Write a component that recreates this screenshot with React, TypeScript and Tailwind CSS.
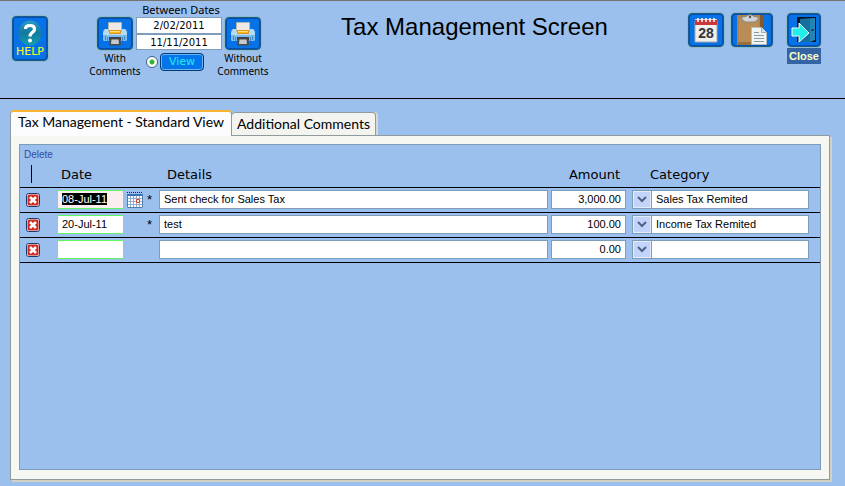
import React from 'react';

type Entry = {
  date: string;
  details: string;
  amount: string;
  category: string;
};

const entries: Entry[] = [
  { date: '08-Jul-11', details: 'Sent check for Sales Tax', amount: '3,000.00', category: 'Sales Tax Remited' },
  { date: '20-Jul-11', details: 'test', amount: '100.00', category: 'Income Tax Remited' },
  { date: '', details: '', amount: '0.00', category: '' },
];

const categories = ['', 'Sales Tax Remited', 'Income Tax Remited'];

const iconButton =
  'flex items-center justify-center rounded-sm border border-[#1c5a8c] bg-[#0672e6] shadow-[inset_0_0_0_1px_#0350b4,0_0_0_1px_#8dbcc8]';

const HelpIcon = () => (
  <svg width="24" height="26" viewBox="0 0 24 26" aria-hidden="true">
    <defs>
      <linearGradient id="help" x1="0" y1="0" x2="0" y2="1">
        <stop offset="0" stopColor="#2b9bc8" />
        <stop offset="0.5" stopColor="#127a9f" />
        <stop offset="1" stopColor="#159fae" />
      </linearGradient>
    </defs>
    <ellipse cx="12" cy="13" rx="11.5" ry="12.5" fill="url(#help)" />
    <path d="M7.500 9C7.500 6.500 9.500 5.500 12 5.500s4.500 1.300 4.500 3.700c0 3.300-4.500 3-4.500 7.300" fill="none" stroke="#fff" strokeWidth="3.200" />
    <circle cx="12" cy="20.500" r="2" fill="#fff" />
  </svg>
);

const PrinterIcon = () => (
  <svg width="26" height="26" viewBox="0 0 26 26" aria-hidden="true">
    <path d="M3 8h20q2 1 2 4v6q0 2-2 2H3q-2 0-2-2v-6q0-3 2-4z" fill="#b4dcf8" />
    <path d="M1 14h24v4q0 2-2 2H3q-2 0-2-2z" fill="#7bbcec" />
    <path d="M3.500 15v4M5.500 16v4M20.500 16v4M22.500 15v4" stroke="#4188c4" />
    <path d="M6.500 1.500h13v9h-13z" fill="#eceae6" stroke="#b5b3ae" />
    <path d="M7.500 9.500h11v3h-11z" fill="#fbb91d" stroke="#e39512" />
    <path d="M8 10.500h10" stroke="#ffe17a" />
    <path d="M7 16h12v3l-1 2H8l-1-2z" fill="#3d3f45" />
    <path d="M8 17.500h10l1 7H7z" fill="#4a4a4e" />
    <path d="M9.500 18.500h7l.5 4.500h-8z" fill="#c9cacb" />
  </svg>
);

const CalendarIcon = () => (
  <svg width="26" height="28" viewBox="0 0 26 28" aria-hidden="true">
    <path d="M2 5h22v21H2z" fill="#efefed" stroke="#aaa9a8" />
    <path d="M2 4h22v5H2z" fill="#c93538" />
    <path d="M2 3.500h22" stroke="#e8c6c6" />
    <path d="M5 2v4M9 2v4M13 2v4M17 2v4M21 2v4" stroke="#fff" strokeWidth="1.500" />
    <text x="13" y="22" textAnchor="middle" fontFamily="Liberation Sans, sans-serif" fontWeight="700" fontSize="14" fill="#333">
      28
    </text>
  </svg>
);

const ClipboardIcon = () => (
  <svg width="32" height="32" viewBox="0 0 32 32" aria-hidden="true">
    <path d="M1 1h26v30H1z" fill="#b0834a" />
    <path d="M24 1h3v30h-3z" fill="#80592e" />
    <path d="M3 4h20v24H3z" fill="#b98d55" />
    <path d="M2 28h14v3H2z" fill="#98713e" />
    <path d="M6 3q5 0 6-2h4q1 2 6 2v3q-2 0-3 2H9Q8 6 6 6z" fill="#d2d3d4" stroke="#8a8a8a" />
    <circle cx="14" cy="3" r="1.200" fill="#555" />
    <path d="M15.500 13.500h10l5 5v12h-15z" fill="#f1f4f4" stroke="#b5bdc0" />
    <path d="M25.500 13.500v5h5" fill="#dce1e2" stroke="#a5acaf" />
    <path d="M18 18.500h5M18 21.500h10M18 24.500h10M18 27.500h10" stroke="#8c999c" />
  </svg>
);

const DoorIcon = () => (
  <svg width="28" height="28" viewBox="0 0 28 28" aria-hidden="true">
    <path d="M7 1h19v25H7z" fill="#061629" />
    <path d="M10 3l15-1v22l-5 2H10z" fill="#2385b4" />
    <path d="M10 3h10v23H10z" fill="#176fa1" />
    <circle cx="22.500" cy="14" r="1" fill="#0a2540" />
    <path d="M2 12h7V7l10 10L9 26v-6H2z" fill="#22efea" stroke="#efffff" />
  </svg>
);

const DatePickerIcon = () => (
  <svg width="16" height="16" viewBox="0 0 16 16" aria-hidden="true">
    <path d="M0 2h16v14H0z" fill="#fff" />
    <path d="M0 2h16v2H0z" fill="#3c70b7" />
    <path d="M0 .5h16" stroke="#222" strokeDasharray="1 1" />
    <path d="M3.500 4v11M6.500 4v11M9.500 4v11M12.500 4v11M0 6.500h15M0 9.500h15M0 12.500h15" stroke="#91add1" />
    <path d="M.5 4v11.500h15V3" fill="none" stroke="#547dac" />
    <path d="M9.500 7.500h3v3h-3z" fill="#fff" stroke="#e04428" />
  </svg>
);

const DeleteIcon = () => (
  <svg width="14" height="14" viewBox="0 0 14 14" aria-hidden="true">
    <rect x="0.500" y="0.500" width="13" height="13" rx="2" fill="#fff" stroke="#173a72" />
    <rect x="1.500" y="1.500" width="11" height="11" rx="1.500" fill="#cf2b22" />
    <path d="M4 4l6 6M10 4l-6 6" stroke="#fff" strokeWidth="2.600" />
  </svg>
);

const PrintColumn: React.FC<{ label: string }> = ({ label }) => (
  <div className="mt-4 flex flex-col items-center gap-0.5 text-center font-['Noto_Sans',sans-serif] text-[10px] leading-[13px]">
    <button type="button" aria-label={`Print ${label} Comments`} className={`${iconButton} h-[33px] w-9`}>
      <PrinterIcon />
    </button>
    <span>
      {label}
      <br />
      Comments
    </span>
  </div>
);

const Header = () => (
  <header className="flex h-[99px] items-start border-t border-b border-t-[#77726c] border-b-black px-3">
    <button type="button" className={`${iconButton} mt-[15px] h-[45px] w-9 flex-col text-[11px] leading-3 text-[#ffff1f]`}>
      <HelpIcon />
      HELP
    </button>

    <section className="ml-[49px] grid grid-cols-[36px_86px_36px] gap-x-[3px]">
      <PrintColumn label="With" />
      <div role="group" aria-label="Report period" className="flex flex-col items-center pt-0.5">
        <span className="pl-1 font-['Noto_Sans',sans-serif] text-[11px] leading-[13px]">Between Dates</span>
        <input aria-label="From date" defaultValue="2/02/2011" className="mt-px h-[17px] w-full border border-[#7f9db9] bg-white text-center text-[10px] outline-none" />
        <input aria-label="To date" defaultValue="11/11/2011" className="h-4 w-full border border-[#7f9db9] bg-white text-center text-[10px] outline-none" />
        <div className="mt-[3px] flex items-center gap-0.5 pr-2">
          <input
            type="radio"
            defaultChecked
            aria-label="Date range"
            className="size-3 appearance-none rounded-full border border-[#38617c] bg-white bg-[radial-gradient(circle,#35b02c_2px,transparent_3px)]"
          />
          <button type="button" className="h-[18px] w-11 rounded-sm border border-[#003c74] bg-[#0474ea] text-[11px] leading-4 text-[#22eeee] shadow-[inset_0_0_0_1px_#6eb3f2]">
            View
          </button>
        </div>
      </div>
      <PrintColumn label="Without" />
    </section>

    <h1 className="mt-2.5 flex-1 text-center font-['Liberation_Sans',sans-serif] text-[24px] leading-8">Tax Management Screen</h1>

    <nav className="mt-3 mr-3 flex items-start">
      <button type="button" aria-label="Calendar" className={`${iconButton} h-[34px] w-9`}>
        <CalendarIcon />
      </button>
      <button type="button" aria-label="Notes" className={`${iconButton} ml-[7px] h-[34px] w-[42px]`}>
        <ClipboardIcon />
      </button>
      <button type="button" className="ml-3.5 flex flex-col font-['Liberation_Sans',sans-serif] text-[11px] leading-4 font-bold text-[#ffffc8]">
        <span className={`${iconButton} h-[34px] w-[34px]`}>
          <DoorIcon />
        </span>
        <span className="mt-px w-full bg-[#3564a4] text-center">Close</span>
      </button>
    </nav>
  </header>
);

const Row: React.FC<{ entry: Entry; active: boolean }> = ({ entry, active }) => {
  const field = 'block h-[19px] w-full border border-[#7f9db9] bg-white px-1 pb-0.5 text-[11px] outline-none';
  return (
    <tr className="h-[25px] [&>td]:border-b [&>td]:border-black [&>td]:pb-px">
      <td className="pl-1.5">
        <button type="button" aria-label="Delete row" className="block">
          <DeleteIcon />
        </button>
      </td>
      <td>
        <input
          aria-label="Date"
          defaultValue={entry.date}
          autoFocus={active}
          onFocus={(e) => active && e.target.select()}
          className={`block h-[19px] w-full border border-[#62f562] px-1 pb-0.5 text-[11px] outline-none selection:bg-black selection:text-white ${active ? 'bg-[#fbeeee]' : 'bg-white'}`}
        />
      </td>
      <td className="pl-[3px]">
        {active && (
          <button type="button" aria-label="Pick date" className="block">
            <DatePickerIcon />
          </button>
        )}
      </td>
      <td className="pl-0.5 text-[13px] leading-4">{entry.date && '*'}</td>
      <td className="pr-[3px]">
        <input aria-label="Details" defaultValue={entry.details} className={field} />
      </td>
      <td className="pr-1.5">
        <input aria-label="Amount" defaultValue={entry.amount} className={`${field} text-right`} />
      </td>
      <td className="pr-[11px]">
        <div className="relative">
          <select aria-label="Category" defaultValue={entry.category} className="block h-[19px] w-full appearance-none border border-[#7f9db9] bg-white pb-0.5 pl-[23px] text-[11px] outline-none">
            {categories.map((category) => (
              <option key={category} value={category}>
                {category}
              </option>
            ))}
          </select>
          <span className="pointer-events-none absolute inset-y-0 left-0 flex w-5 items-center justify-center border border-[#7f9db9] bg-[#c3d4fb] shadow-[inset_0_0_0_1px_#e2ecff]">
            <svg width="10" height="7" viewBox="0 0 10 7" aria-hidden="true">
              <path d="M1 1l4 4 4-4" fill="none" stroke="#4d6185" strokeWidth="2" />
            </svg>
          </span>
        </div>
      </td>
    </tr>
  );
};

export default function App() {
  return (
    <div className="flex min-h-screen flex-col bg-[#9bc0ee] font-['DejaVu_Sans',sans-serif] text-black">
      <Header />
      <main className="flex flex-1 flex-col pt-[11px] pr-[15px] pb-1.5 pl-2.5">
        <div role="tablist" className="flex items-end font-['Lato',sans-serif] text-[14px] leading-5">
          <button type="button" role="tab" aria-selected="true" className="relative z-10 -mb-px h-[26px] rounded-t-sm border border-t-2 border-b-0 border-[#919b9c] border-t-[#f9b52d] bg-[#fcfcfe] px-[7px] pb-1">
            Tax Management - Standard View
          </button>
          <button type="button" role="tab" aria-selected="false" className="h-[23px] rounded-t-sm border border-b-0 border-l-0 border-[#919b9c] bg-[#f3f3ef] px-[5px] shadow-[2px_0_0_#d8d9ce]">
            Additional Comments
          </button>
        </div>
        <section className="flex flex-1 flex-col border border-[#919b9c] bg-[#f6f6f2] p-2 pb-[9px] shadow-[2px_2px_0_#d3d2c2]">
          <div className="flex-1 border border-[#7f9db9] bg-[#9bc0ee]">
            <table className="w-full table-fixed border-separate border-spacing-0 font-['Liberation_Sans',sans-serif]">
              <colgroup>
                <col className="w-[37px]" />
                <col className="w-[67px]" />
                <col className="w-[21px]" />
                <col className="w-[14px]" />
                <col />
                <col className="w-[81px]" />
                <col className="w-[188px]" />
              </colgroup>
              <thead>
                <tr className="h-[43px] text-left align-bottom font-['DejaVu_Sans',sans-serif] text-[13px] leading-4 [&>th]:border-b [&>th]:border-black">
                  <th className="pb-1 pl-1 font-['Liberation_Sans',sans-serif] text-[10px] leading-3 font-normal text-[#344ba0]">
                    Delete
                    <span className="mt-1 ml-[7px] block h-[18px] w-px bg-black" />
                  </th>
                  <th className="pb-1 pl-1 font-normal" colSpan={3}>Date</th>
                  <th className="pb-1 pl-2 font-normal">Details</th>
                  <th className="pr-3 pb-1 text-right font-normal">Amount</th>
                  <th className="pb-1 pl-[18px] font-normal">Category</th>
                </tr>
              </thead>
              <tbody>
                {entries.map((entry, i) => (
                  <Row key={i} entry={entry} active={i === 0} />
                ))}
              </tbody>
            </table>
          </div>
        </section>
      </main>
    </div>
  );
}
